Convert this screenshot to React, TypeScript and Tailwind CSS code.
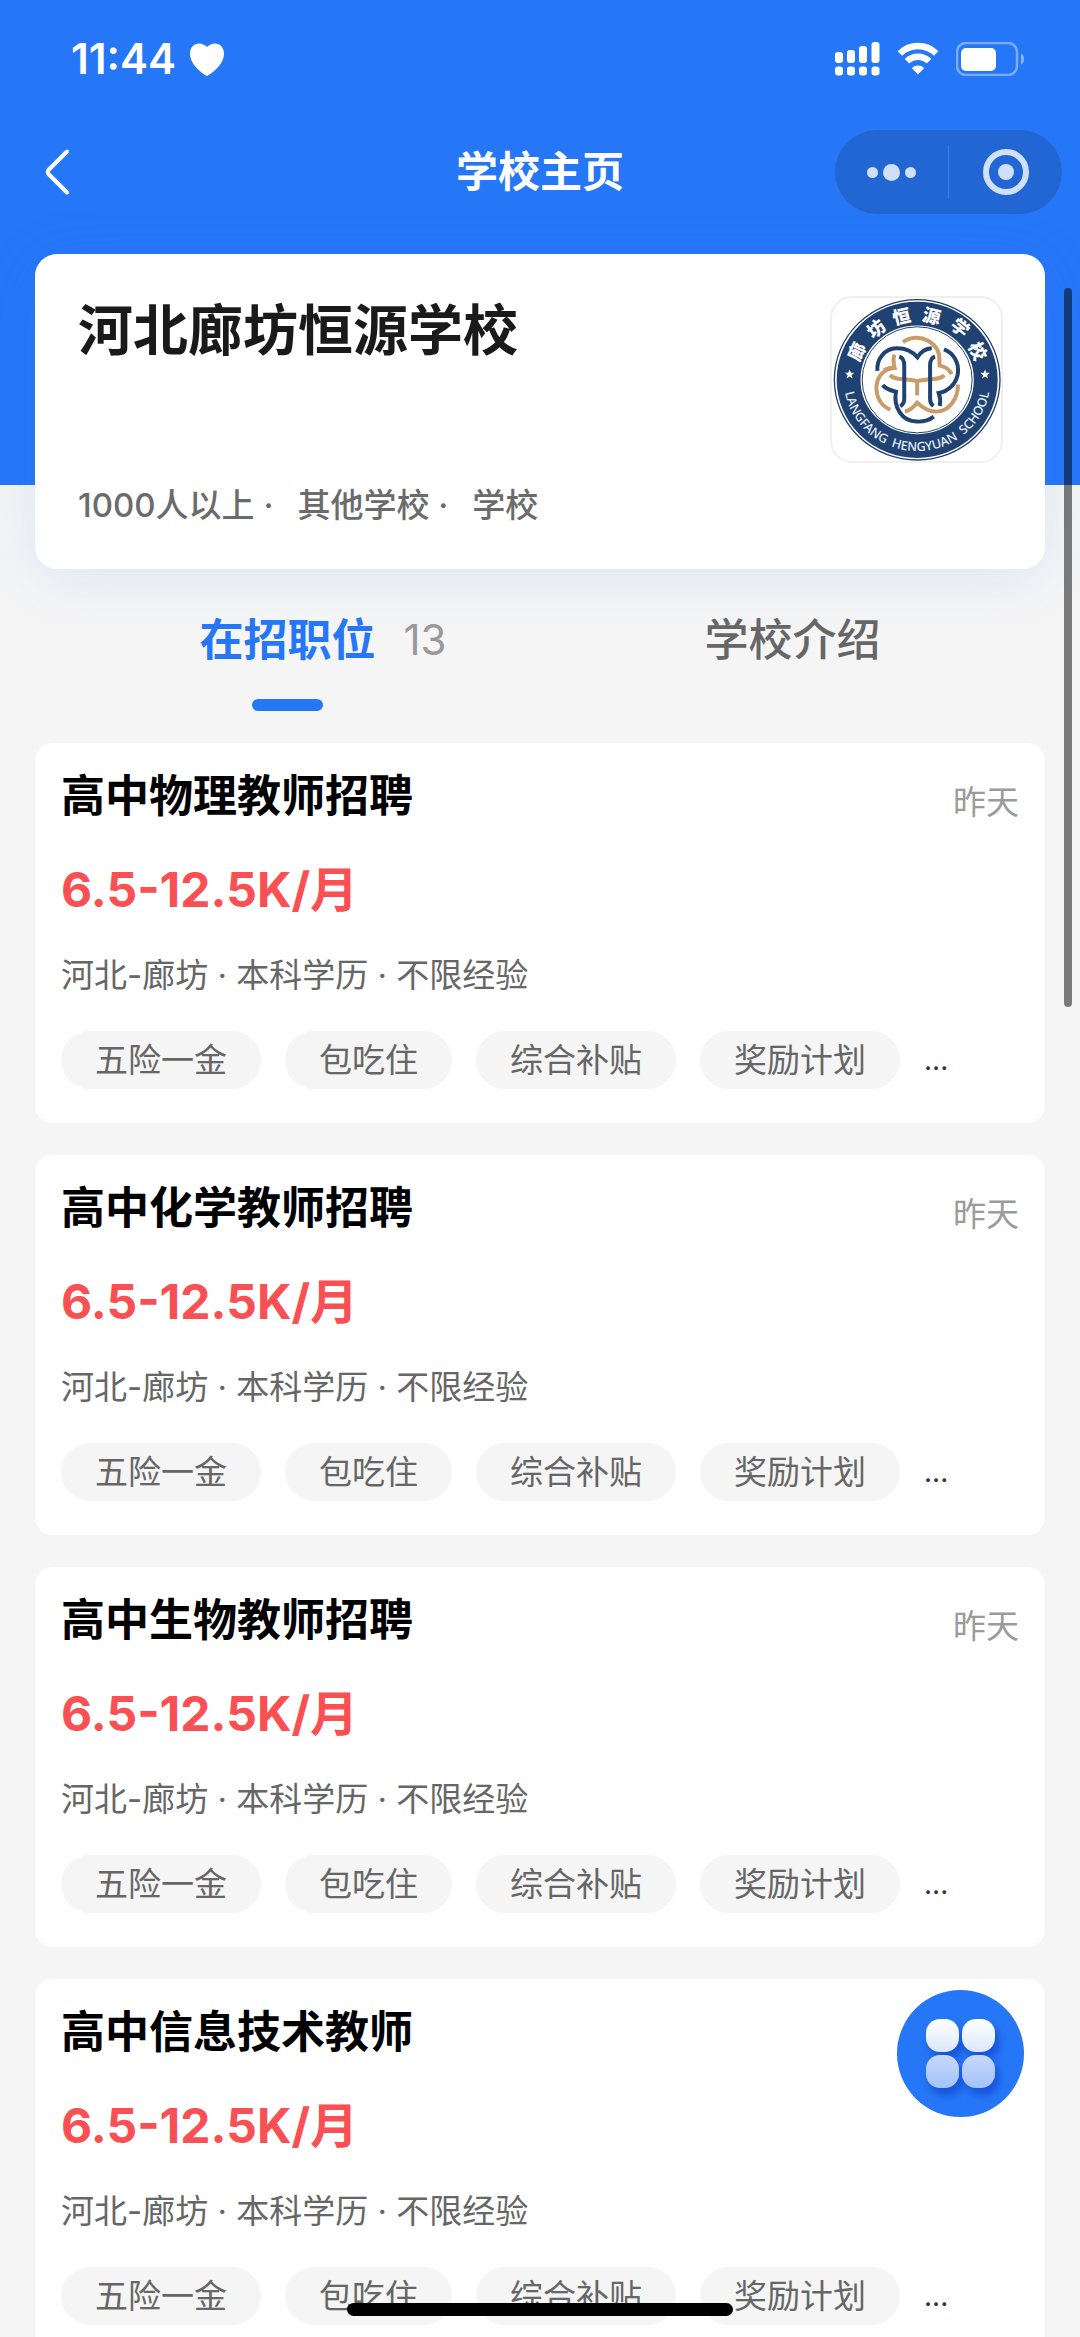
import React from 'react';

interface Job {
  title: string;
  salary: string;
  meta: string;
  date?: string;
}

const TAGS = ['五险一金', '包吃住', '综合补贴', '奖励计划'];

const JOBS: Job[] = [
  { title: '高中物理教师招聘', salary: '6.5-12.5K/月', meta: '河北-廊坊 · 本科学历 · 不限经验', date: '昨天' },
  { title: '高中化学教师招聘', salary: '6.5-12.5K/月', meta: '河北-廊坊 · 本科学历 · 不限经验', date: '昨天' },
  { title: '高中生物教师招聘', salary: '6.5-12.5K/月', meta: '河北-廊坊 · 本科学历 · 不限经验', date: '昨天' },
  { title: '高中信息技术教师', salary: '6.5-12.5K/月', meta: '河北-廊坊 · 本科学历 · 不限经验' },
];

const LOGO_CHARS = [
  { char: '廊', x: 168, y: 247, angle: -65 },
  { char: '坊', x: 226, y: 178, angle: -39 },
  { char: '恒', x: 303, y: 141, angle: -13 },
  { char: '源', x: 394, y: 140, angle: 13 },
  { char: '学', x: 480, y: 174, angle: 39 },
  { char: '校', x: 533, y: 245, angle: 65 },
];

const STAR = 'M0 -15 L4 -5 L14 -5 L6 2 L9 12 L0 6 L-9 12 L-6 2 L-14 -5 L-4 -5 Z';

const StatusBar: React.FC = () => (
  <div className="flex h-[118px] items-center justify-between pl-[71px] pr-[55px]">
    <div className="flex items-center gap-3.5">
      <span className="text-[42px] font-semibold leading-none">11:44</span>
      <svg className="h-[33px] w-[34px]" viewBox="0 0 34 33" fill="currentColor" aria-hidden="true">
        <path d="M17 33 C13 31 0 22 0 10.500 C0 4.500 4 0.500 9 0.500 C12.500 0.500 15.500 2.500 17 4 C18.500 2.500 21.500 0.500 25 0.500 C30 0.500 34 4.500 34 10.500 C34 22 21 31 17 33 Z" />
      </svg>
    </div>
    <div className="flex items-center gap-[17px]">
      <svg className="h-[34px] w-[45px]" viewBox="0 0 45 34" fill="currentColor" aria-hidden="true">
        <rect x="0" y="10" width="8" height="11" rx="3" />
        <rect x="12" y="8" width="8" height="13" rx="3" />
        <rect x="24" y="4" width="8" height="17" rx="3" />
        <rect x="36.500" y="0" width="8" height="21" rx="3" />
        <rect x="0" y="24.500" width="8" height="9" rx="3" />
        <rect x="12" y="24.500" width="8" height="9" rx="3" />
        <rect x="24" y="24.500" width="8" height="9" rx="3" />
        <rect x="36.500" y="24.500" width="8" height="9" rx="3" />
      </svg>
      <svg className="h-[34px] w-[42px]" viewBox="0 0 42 34" aria-hidden="true">
        <g fill="none" stroke="currentColor" strokeWidth="6.500">
          <path d="M2.800 11.500 A26 26 0 0 1 39.200 11.500" />
          <path d="M10 19.300 A15.500 15.500 0 0 1 32 19.300" />
        </g>
        <path d="M21 32.500 L14.800 26 A9 9 0 0 1 27.200 26 Z" fill="currentColor" />
      </svg>
      <svg className="h-[34px] w-[69px]" viewBox="0 0 69 34" aria-hidden="true">
        <rect x="1" y="1" width="60" height="32" rx="9" fill="none" stroke="white" strokeOpacity="0.4" strokeWidth="2.500" />
        <rect x="5" y="6" width="35" height="23" rx="5" fill="white" />
        <path d="M65 11.500 C69 13 69 21 65 22.500 Z" fill="white" fillOpacity="0.45" />
      </svg>
    </div>
  </div>
);

const NavBar: React.FC = () => (
  <div className="grid h-[108px] grid-cols-[1fr_auto_1fr] items-center px-[18px]">
    <button type="button" aria-label="返回" className="flex h-[60px] w-20 items-center pl-[26px]">
      <svg className="h-[46px] w-[26px]" viewBox="0 0 26 46" fill="none" stroke="currentColor" strokeWidth="4" strokeLinecap="round" strokeLinejoin="round" aria-hidden="true">
        <path d="M23 2.500 L4.500 21 Q3 23 4.500 25 L23 43.500" />
      </svg>
    </button>
    <h1 className="text-[42px] font-bold leading-none">学校主页</h1>
    <div className="flex h-[84px] w-[227px] items-center justify-self-end rounded-full bg-[#2266d3] text-[#d0e0f8]">
      <button type="button" aria-label="更多" className="flex flex-1 items-center justify-center gap-[5px]">
        <span className="size-[11px] rounded-full bg-current" />
        <span className="size-[17px] rounded-full bg-current" />
        <span className="size-[11px] rounded-full bg-current" />
      </button>
      <span className="h-[54px] w-px bg-[#3c7ce3]" />
      <button type="button" aria-label="关闭" className="flex flex-1 items-center justify-center">
        <span className="flex size-[46px] items-center justify-center rounded-full border-[6px] border-current">
          <span className="size-4 rounded-full bg-current" />
        </span>
      </button>
    </div>
  </div>
);

const SchoolLogo: React.FC = () => (
  <svg className="h-full w-full" viewBox="93 85 510 492" role="img" aria-label="廊坊恒源学校">
    <ellipse cx="350" cy="332" rx="250" ry="242" fill="none" stroke="#1f4272" strokeWidth="4" />
    <ellipse cx="350" cy="332" rx="207" ry="200" fill="none" stroke="#1f4272" strokeWidth="72" />
    <ellipse cx="350" cy="332" rx="166" ry="160" fill="none" stroke="#1f4272" strokeWidth="3" />
    {LOGO_CHARS.map((item) => (
      <text
        key={item.char}
        transform={`translate(${item.x} ${item.y}) rotate(${item.angle})`}
        textAnchor="middle"
        dominantBaseline="central"
        fontSize="54"
        fontWeight="900"
        fill="white"
      >
        {item.char}
      </text>
    ))}
    <path d={STAR} transform="translate(146 316)" fill="white" />
    <path d={STAR} transform="translate(555 316)" fill="white" />
    <path id="logo-arc" d="M129 332 A221 215 0 0 0 571 332" fill="none" />
    <text fontSize="38" fontWeight="500" fill="#e6edf5" textAnchor="middle" fontFamily="'Noto Sans', sans-serif">
      <textPath href="#logo-arc" startOffset="50%">{'LANGFANG\u00a0\u00a0HENGYUAN\u00a0\u00a0SCHOOL'}</textPath>
    </text>
    <g transform="translate(180 165)" fill="none" strokeWidth="12">
      <g stroke="#c99c6b">
        <path d="M127 53 C150 37 180 36 203 49 C226 62 238 84 237 107 L238 124 C254 127 268 137 274 150" />
        <path d="M102 91 C96 103 98 115 102 131 C72 132 49 155 47 188 C46 222 64 247 89 257" />
        <path d="M70 138 C80 132 92 130 105 130" />
        <path d="M293 181 C294 226 265 262 229 263 C204 263 185 250 170 236 C160 249 148 259 133 263" />
        <path d="M88 153 C104 171 130 160 170 171 C210 160 236 171 252 153" />
        <path d="M170 168 V214" />
      </g>
      <g stroke="#1f4272">
        <path d="M50 140 C47 104 72 73 107 72 C134 71 154 80 171 99 C181 83 197 73 214 72" />
        <path d="M251 75 C280 86 297 115 293 147 C289 178 264 202 235 207 C240 220 241 232 238 246" />
        <path d="M66 183 C77 196 91 199 106 203 C98 248 122 292 169 293 C188 294 206 289 220 278" />
        <path d="M116 97 C127 100 131 109 131 124 L131 224 C131 235 127 242 119 247" />
        <path d="M224 97 C213 100 209 109 209 124 L209 224 C209 235 212 241 219 246" />
      </g>
    </g>
  </svg>
);

const SchoolCard: React.FC = () => (
  <section className="flex h-[315px] justify-between rounded-[22px] bg-white pb-[42px] pl-[43px] pr-[42px] pt-[42px] shadow-[0_8px_60px_rgba(38,120,248,0.12)]">
    <div className="flex flex-col justify-between">
      <h2 className="text-[55px] font-bold leading-[68px] text-[#1a1a1a]">河北廊坊恒源学校</h2>
      <p className="flex gap-6 text-[33px] font-medium leading-[44px] text-[#6b6b6b]">
        <span>1000人以上 ·</span>
        <span>其他学校 ·</span>
        <span>学校</span>
      </p>
    </div>
    <div className="h-[167px] w-[173px] overflow-hidden rounded-[22px] border-2 border-[#f0f0f0]">
      <SchoolLogo />
    </div>
  </section>
);

const Tabs: React.FC = () => (
  <nav className="grid h-[174px] grid-cols-2 text-[44px] leading-[60px]" role="tablist">
    <button type="button" role="tab" aria-selected="true" className="flex flex-col items-center pt-[41px] font-bold text-[#2677f7]">
      <span className="relative">
        在招职位
        <span className="absolute left-full top-0 pl-[28px] text-[42px] font-normal text-[#999999]">13</span>
      </span>
      <span className="mt-[29px] h-3 w-[71px] rounded-full bg-[#2677f7]" />
    </button>
    <button type="button" role="tab" aria-selected="false" className="flex flex-col items-center pt-[41px] font-medium text-[#666666]">
      学校介绍
    </button>
  </nav>
);

const JobCard: React.FC<{ job: Job }> = ({ job }) => (
  <li className="h-[380px] shrink-0 rounded-[18px] bg-white px-[26px] pt-[23px]">
    <div className="flex items-start justify-between">
      <h3 className="text-[44px] font-bold leading-[60px] text-black">{job.title}</h3>
      {job.date && <time className="pt-[13px] text-[33px] leading-[46px] text-[#9b9b9b]">{job.date}</time>}
    </div>
    <p className="mt-[34px] text-[48px] font-bold leading-[60px] text-[#fa5053]">{job.salary}</p>
    <p className="mt-8 text-[33px] leading-[46px] text-[#666666]">{job.meta}</p>
    <ul className="mt-[33px] flex gap-6 text-[33px] leading-[58px] text-[#666666]">
      {TAGS.map((tag) => (
        <li key={tag} className="rounded-full bg-[#f5f5f5] px-[34px]">
          {tag}
        </li>
      ))}
      <li className="text-[28px] text-[#333333]">...</li>
    </ul>
  </li>
);

const AppsButton: React.FC = () => (
  <button
    type="button"
    aria-label="菜单"
    className="absolute bottom-[220px] right-[56px] flex size-[127px] items-center justify-center rounded-full bg-[#2677f7]"
  >
    <span className="grid grid-cols-2 gap-[3px] drop-shadow-[4px_7px_4px_rgba(16,66,205,0.7)]">
      <span className="size-[33px] rounded-[14px] bg-gradient-to-b from-white to-[#dce7fd]" />
      <span className="size-[33px] rounded-[14px] bg-gradient-to-b from-white to-[#dce7fd]" />
      <span className="size-[33px] rounded-[14px] bg-gradient-to-b from-[#c6d8fb] to-[#a3c3fa]" />
      <span className="size-[33px] rounded-[14px] bg-gradient-to-b from-[#c6d8fb] to-[#a3c3fa]" />
    </span>
  </button>
);

const App: React.FC = () => {
  return (
    <div className="relative h-screen overflow-hidden bg-[#f5f5f5] font-['Inter','Noto_Sans_CJK_SC',sans-serif]">
      <header className="bg-[#2677f7] pb-[259px] text-white">
        <StatusBar />
        <NavBar />
      </header>
      <main className="relative -mt-[231px] px-[35px]">
        <SchoolCard />
        <Tabs />
        <ul className="flex flex-col gap-8">
          {JOBS.map((job) => (
            <JobCard key={job.title} job={job} />
          ))}
        </ul>
      </main>
      <div className="absolute right-2 top-[288px] h-[719px] w-2 rounded-full bg-black/50" />
      <AppsButton />
      <div className="absolute bottom-[21px] left-1/2 h-[13px] w-[386px] -translate-x-1/2 rounded-full bg-black" />
    </div>
  );
};

export default App;
